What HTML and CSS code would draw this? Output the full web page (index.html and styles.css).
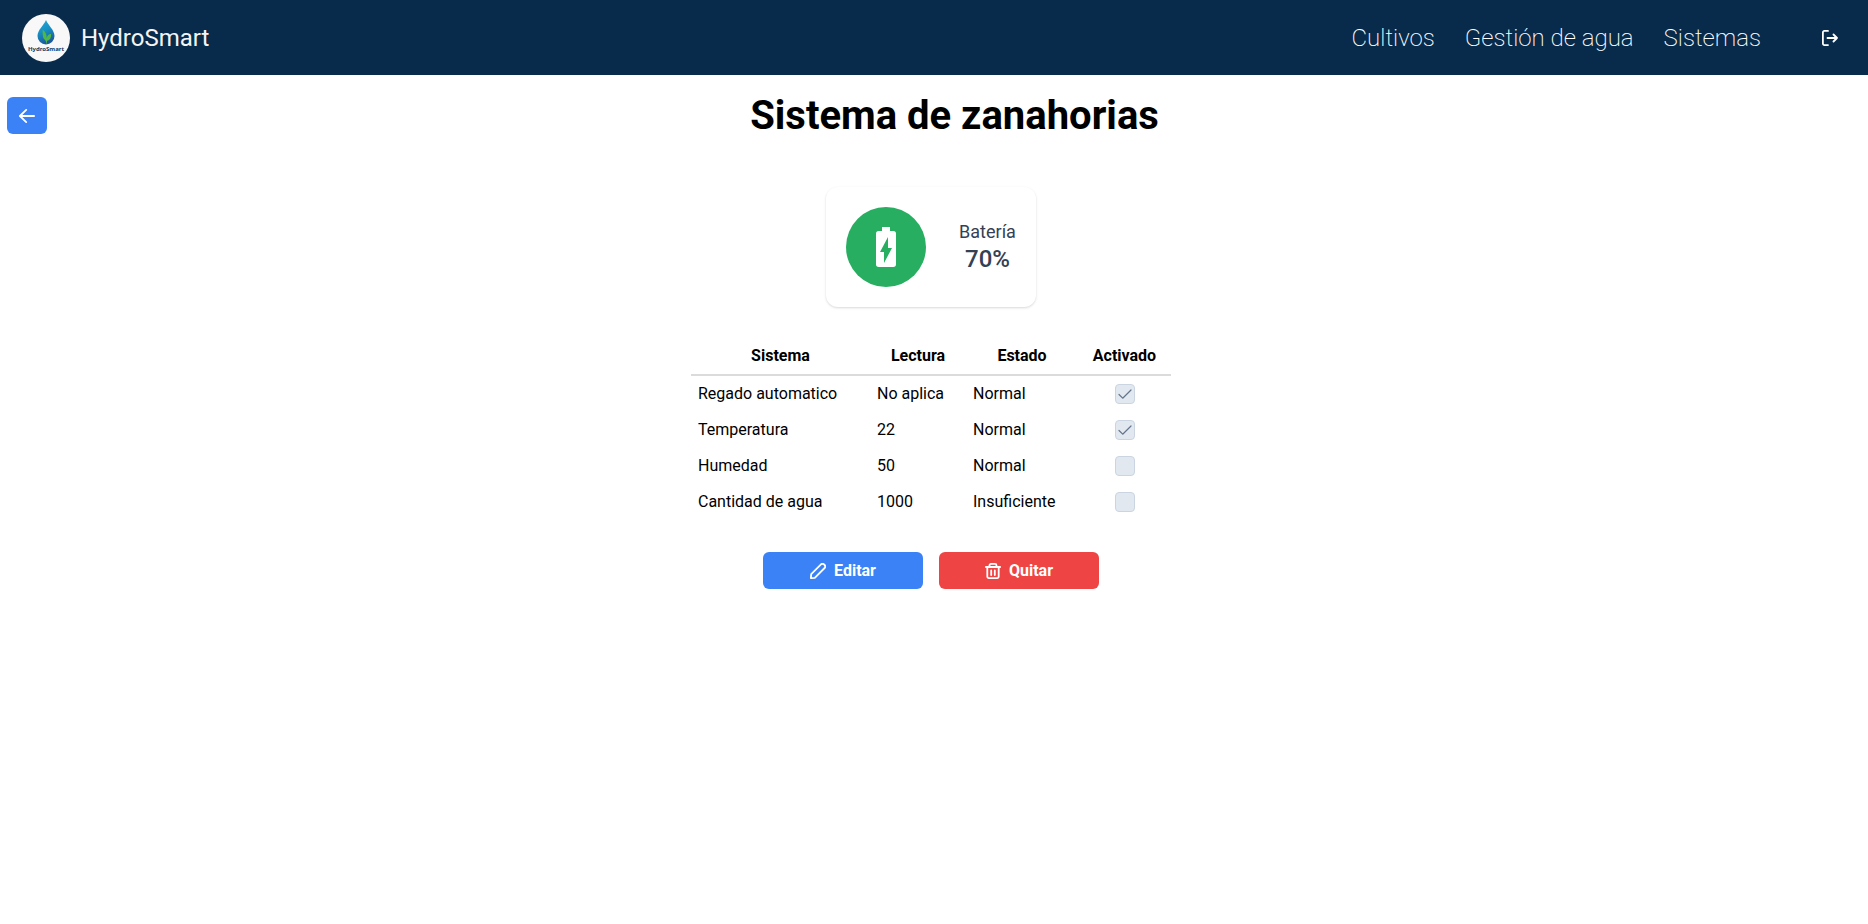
FILE: index.html
```html
<!DOCTYPE html>
<html lang="es">
<head>
<meta charset="utf-8">
<title>HydroSmart</title>
<link rel="stylesheet" href="styles.css">
</head>
<body>
<header class="navbar">
  <a class="brand" href="#">
    <svg class="logo" viewBox="0 0 48 48" role="img" aria-label="HydroSmart">
      <defs>
        <linearGradient id="drop" x1="0" y1="0" x2="0.3" y2="1">
          <stop offset="0" stop-color="#25a9d8"/>
          <stop offset="0.5" stop-color="#1790c4"/>
          <stop offset="1" stop-color="#1c5a9c"/>
        </linearGradient>
      </defs>
      <circle cx="24" cy="24" r="24" fill="#f8f8f9"/>
      <path d="M24 6C22 11 15.500 16 15.500 22a8.500 8.500 0 0 0 17 0C32.500 16 26 11 24 6z" fill="url(#drop)"/>
      <path d="M24.300 30c-.2-2.500-.5-3.300-1.500-4.300-2-1.500-2.300-4.700-2.100-10.200 3 2.500 4.300 5.500 3.900 8.500.8-2.500 2-4 4.500-4.300.2 4-1 6.300-3.900 7-.4 1-.5 1.800-.5 3.300z" fill="#4eb748"/>
      <text class="logo-text" x="24" y="37" text-anchor="middle">HydroSmart</text>
    </svg>
    <span>HydroSmart</span>
  </a>
  <nav class="menu">
    <a href="#">Cultivos</a>
    <a href="#">Gestión de agua</a>
    <a href="#">Sistemas</a>
    <button class="logout" type="button" aria-label="Cerrar sesión">
      <svg class="icon" viewBox="0 0 16 16"><path d="M6 .9H2.400A1.500 1.500 0 0 0 .9 2.400v11.200a1.500 1.500 0 0 0 1.500 1.500H6M5.500 8h9.500M11.500 4.500L15 8l-3.500 3.500"/></svg>
    </button>
  </nav>
</header>
<main class="page">
  <div class="heading">
    <button class="btn btn-back" type="button" aria-label="Volver">
      <svg class="icon" viewBox="0 0 16 16"><path d="M15.100 8H1M7.200 1.900L.9 8l6.300 6.100"/></svg>
    </button>
    <h1>Sistema de zanahorias</h1>
  </div>
  <section class="card">
    <div class="badge">
      <svg class="battery" viewBox="0 0 48 48"><path fill="#fff" d="M31.300 8H28V4h-8v4h-3.300A2.700 2.700 0 0 0 14 10.700v30.600A2.700 2.700 0 0 0 16.700 44h14.600a2.700 2.700 0 0 0 2.700-2.700V10.700A2.700 2.700 0 0 0 31.300 8zM22 40V29h-4l8-15v11h4z"/></svg>
    </div>
    <div class="level">
      <span class="level-label">Batería</span>
      <strong class="level-value">70%</strong>
    </div>
  </section>
  <table class="systems">
    <colgroup><col class="c-system"><col class="c-reading"><col class="c-state"><col class="c-active"></colgroup>
    <thead>
      <tr><th>Sistema</th><th>Lectura</th><th>Estado</th><th>Activado</th></tr>
    </thead>
    <tbody>
      <tr><td>Regado automatico</td><td>No aplica</td><td>Normal</td><td class="check"><input type="checkbox" aria-label="Regado automatico activado" checked disabled></td></tr>
      <tr><td>Temperatura</td><td>22</td><td>Normal</td><td class="check"><input type="checkbox" aria-label="Temperatura activado" checked disabled></td></tr>
      <tr><td>Humedad</td><td>50</td><td>Normal</td><td class="check"><input type="checkbox" aria-label="Humedad activado" disabled></td></tr>
      <tr><td>Cantidad de agua</td><td>1000</td><td>Insuficiente</td><td class="check"><input type="checkbox" aria-label="Cantidad de agua activado" disabled></td></tr>
    </tbody>
  </table>
  <div class="actions">
    <button class="btn" type="button">
      <svg class="icon" viewBox="0 0 16 16"><path d="M.9 15.100l.3-4L11 1.400a2.100 2.100 0 0 1 3 0l.6.6a2.100 2.100 0 0 1 0 3L4.800 14.800z"/></svg>
      Editar
    </button>
    <button class="btn btn-danger" type="button">
      <svg class="icon" viewBox="0 0 16 16"><path d="M.9 4h14.200M4.500 4V2.400A1.500 1.500 0 0 1 6 .9h4a1.500 1.500 0 0 1 1.500 1.500V4M2.300 4v9.600a1.500 1.500 0 0 0 1.500 1.500h8.400a1.500 1.500 0 0 0 1.500-1.500V4M6.200 7.500v4.500M9.800 7.500v4.500"/></svg>
      Quitar
    </button>
  </div>
</main>
</body>
</html>
```
FILE: styles.css
```css
* {
  box-sizing: border-box;
}

body {
  margin: 0;
  background: #fff;
  color: #000;
  font-family: Roboto, sans-serif;
  font-size: 16px;
  line-height: 20px;
}

.navbar {
  display: flex;
  align-items: center;
  justify-content: space-between;
  min-height: 75px;
  padding: 0 30px 0 22px;
  background: #082b4c;
  color: #fff;
  font-size: 24px;
  line-height: 28px;
}

.brand {
  display: flex;
  align-items: center;
  gap: 11px;
  color: #f4f4f4;
  text-decoration: none;
}

.logo {
  width: 48px;
  height: 48px;
}

.logo-text {
  font-family: "Noto Sans", sans-serif;
  font-size: 6px;
  font-weight: 700;
  fill: #17395f;
}

.menu {
  display: flex;
  align-items: center;
  gap: 30px;
}

.menu a {
  color: #fff;
  font-weight: 200;
  text-decoration: none;
}

.logout {
  display: flex;
  margin-left: 31px;
  padding: 0;
  border: 0;
  background: none;
  color: #fff;
}

.icon {
  width: 16px;
  height: 16px;
  fill: none;
  stroke: currentColor;
  stroke-width: 1.8;
  stroke-linecap: round;
  stroke-linejoin: round;
}

.page {
  display: flex;
  flex-direction: column;
  align-items: center;
  padding: 17px 6px 0 0;
}

.heading {
  display: flex;
  align-items: center;
  align-self: stretch;
  padding-left: 7px;
}

h1 {
  flex: 1;
  margin: 0;
  font-size: 40px;
  font-weight: 700;
  line-height: 47px;
  text-align: center;
}

.btn {
  display: flex;
  align-items: center;
  justify-content: center;
  gap: 8px;
  width: 160px;
  height: 37px;
  padding: 0;
  border: 0;
  border-radius: 6px;
  background: #3b82f6;
  color: #fff;
  font: 700 16px/20px Roboto, sans-serif;
}

.btn-back {
  width: 40px;
}

.btn-danger {
  background: #ef4444;
}

.card {
  display: flex;
  align-items: center;
  gap: 33px;
  margin-top: 48px;
  padding: 20px;
  border-radius: 12px;
  box-shadow: 0 1px 3px rgba(0, 0, 0, 0.1), 0 1px 2px rgba(0, 0, 0, 0.06);
}

.badge {
  display: grid;
  place-items: center;
  width: 80px;
  height: 80px;
  border-radius: 50%;
  background: #28ae60;
}

.battery {
  width: 48px;
  height: 48px;
}

.level {
  display: flex;
  flex-direction: column;
  align-items: center;
  color: #334155;
}

.level-label {
  font-size: 18px;
  line-height: 24px;
}

.level-value {
  font-size: 24px;
  font-weight: 500;
  line-height: 30px;
}

.systems {
  width: 480px;
  margin-top: 30px;
  border-spacing: 0;
  table-layout: fixed;
}

.c-system {
  width: 179px;
}

.c-reading {
  width: 96px;
}

.c-state {
  width: 112px;
}

th {
  height: 39px;
  padding: 0 7px;
  border-bottom: 2px solid #dbdbdb;
  font-weight: 700;
}

td {
  height: 36px;
  padding: 0 7px;
}

.check {
  text-align: center;
}

.check input {
  display: block;
  appearance: none;
  width: 20px;
  height: 20px;
  margin: 0 auto;
  border: 1px solid #cbd5e1;
  border-radius: 4px;
  background: #e2e8f0;
}

.check input:checked {
  background: #e2e8f0 url("data:image/svg+xml,%3Csvg xmlns='http://www.w3.org/2000/svg' viewBox='0 0 14 14'%3E%3Cpath d='M1 7.500l3.700 3.700L13 3' fill='none' stroke='%2364748b' stroke-width='1.200' stroke-linecap='round' stroke-linejoin='round'/%3E%3C/svg%3E") center / 14px no-repeat;
}

.actions {
  display: flex;
  gap: 16px;
  margin-top: 32px;
}
```
